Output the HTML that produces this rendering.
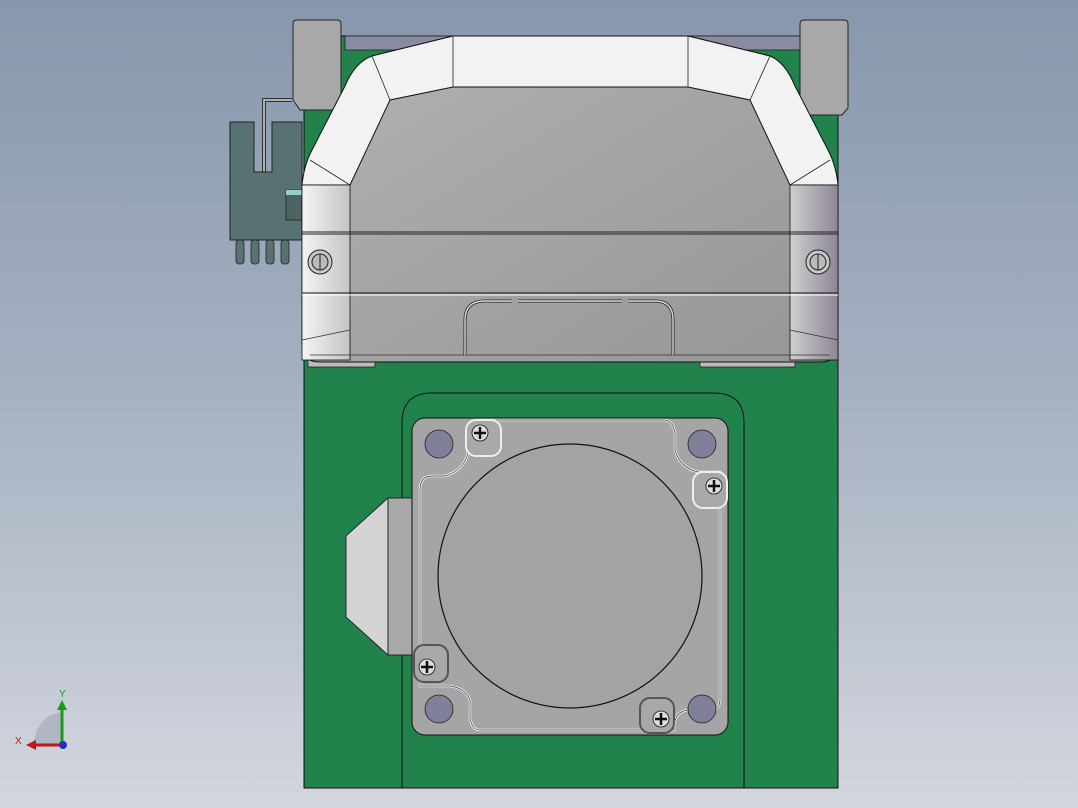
<!DOCTYPE html>
<html><head><style>
html,body{margin:0;padding:0;width:1078px;height:808px;overflow:hidden}
body{background:linear-gradient(#8797ad 0%,#a7b2c2 50%,#d3d6de 100%);font-family:"Liberation Sans",sans-serif}
svg{position:absolute;left:0;top:0}
</style></head><body>
<svg width="1078" height="808" viewBox="0 0 1078 808" xmlns="http://www.w3.org/2000/svg">
<defs>
<linearGradient id="bodyg" x1="0" y1="0" x2="1" y2="1"><stop offset="0" stop-color="#b2b2b2"/><stop offset="1" stop-color="#969696"/></linearGradient>
<linearGradient id="sideL" x1="0" x2="1"><stop offset="0" stop-color="#f4f4f4"/><stop offset="1" stop-color="#c4c4c4"/></linearGradient>
<linearGradient id="sideR" x1="0" x2="1"><stop offset="0" stop-color="#cfcfcf"/><stop offset="1" stop-color="#8e8696"/></linearGradient>
</defs>
<rect x="304" y="36" width="534" height="752" fill="#21834b" stroke="#111" stroke-width="1"/>
<rect x="345" y="36" width="455" height="14" fill="#8a8aa0" stroke="#222" stroke-width="0.8"/>
<path d="M402 788 V423 Q402 393 432 393 H714 Q744 393 744 423 V788" fill="none" stroke="#111" stroke-width="1"/>
<path d="M293 24 Q293 20 297 20 H337 Q341 20 341 24 V100 L335 110 H300 L293 100 Z" fill="#a8a8a8" stroke="#222" stroke-width="1"/>
<path d="M800 24 Q800 20 804 20 H844 Q848 20 848 24 V108 L842 115 H808 L800 108 Z" fill="#a8a8a8" stroke="#222" stroke-width="1"/>
<path d="M264 172 V100 H292" fill="none" stroke="#333" stroke-width="4"/>
<path d="M264 172 V100 H292" fill="none" stroke="#a8b0b0" stroke-width="2"/>
<path d="M230 122 H254 V172 H272 V122 H302 V240 H230 Z" fill="#587272" stroke="#222" stroke-width="1"/>
<rect x="286" y="190" width="16" height="30" fill="#4d6464" stroke="#222" stroke-width="0.8"/>
<rect x="286" y="190" width="16" height="5" fill="#9cc"/>
<g fill="#587272" stroke="#222" stroke-width="0.8">
<rect x="236" y="240" width="8" height="24" rx="3"/><rect x="251" y="240" width="8" height="24" rx="3"/><rect x="266" y="240" width="8" height="24" rx="3"/><rect x="281" y="240" width="8" height="24" rx="3"/>
</g>
<rect x="308" y="355" width="67" height="12" fill="#bcbcbc" stroke="#222" stroke-width="0.8"/>
<rect x="700" y="355" width="95" height="12" fill="#bcbcbc" stroke="#222" stroke-width="0.8"/>
<path d="M302 190 L330 133 Q345 120 372 56 L453 36 H688 L770 56 Q795 110 838 180 V345 Q838 362 820 362 H320 Q302 362 302 345 Z" fill="url(#bodyg)" stroke="#111" stroke-width="1"/>
<path d="M302 185 Q304 165 312 150 L345 86 Q355 62 372 56 L453 36 H688 L770 56 Q785 62 795 86 L828 150 Q836 165 838 185 H790 L750 100 L688 87 H453 L390 100 L350 185 Z" fill="#f2f2f2" stroke="#111" stroke-width="1"/>
<path d="M453 36 V87 M688 36 V87 M372 56 L390 100 M770 56 L750 100 M310 160 L350 185 M830 160 L790 185" stroke="#222" stroke-width="0.8" fill="none"/>
<rect x="302" y="185" width="48" height="175" fill="url(#sideL)" stroke="#111" stroke-width="0.8"/>
<rect x="790" y="185" width="48" height="175" fill="url(#sideR)" stroke="#111" stroke-width="0.8"/>
<path d="M302 232 H838 M302 234 H838" stroke="#222" stroke-width="1"/>
<path d="M302 293 H838" stroke="#111" stroke-width="1"/>
<path d="M302 295 H838" stroke="#fff" stroke-width="1"/>
<path d="M302 340 L350 330 M838 340 L790 330 M310 355 H830" stroke="#333" stroke-width="0.8" fill="none"/>
<circle cx="320" cy="262" r="12" fill="#c8c8c8" stroke="#222"/><circle cx="320" cy="262" r="8" fill="#bbb" stroke="#222"/><line x1="320" y1="254" x2="320" y2="270" stroke="#222"/>
<circle cx="818" cy="262" r="12" fill="#c8c8c8" stroke="#222"/><circle cx="818" cy="262" r="8" fill="#bbb" stroke="#222"/><line x1="818" y1="254" x2="818" y2="270" stroke="#222"/>
<path d="M465 355 V320 Q465 301 485 301 H512 M518 301 H622 M628 301 H655 Q673 301 673 320 V355" fill="none" stroke="#222" stroke-width="3"/>
<path d="M465 355 V320 Q465 301 485 301 H512 M518 301 H622 M628 301 H655 Q673 301 673 320 V355" fill="none" stroke="#ddd" stroke-width="1.4"/>
<path d="M346 536 L388 498 V655 L346 617 Z" fill="#d4d4d4" stroke="#111" stroke-width="0.8"/>
<rect x="388" y="498" width="24" height="157" fill="#a8a8a8" stroke="#111" stroke-width="0.8"/>
<rect x="412" y="418" width="316" height="317" rx="13" fill="#a5a5a5" stroke="#111" stroke-width="1"/>
<path d="M420 490 Q420 476 432 476 H445 Q465 470 468 452 V430 Q470 420 478 420 H664 Q672 420 675 432 V450 Q680 468 698 472 H720 V700 Q720 708 712 710 L690 710 Q676 710 674 725 V730 H480 Q472 730 470 718 V700 Q465 688 450 686 H420 Z" fill="none" stroke="#f4f4f4" stroke-width="2.5"/>
<path d="M420 490 Q420 476 432 476 H445 Q465 470 468 452 V430 Q470 420 478 420 H664 Q672 420 675 432 V450 Q680 468 698 472 H720 V700 Q720 708 712 710 L690 710 Q676 710 674 725 V730 H480 Q472 730 470 718 V700 Q465 688 450 686 H420 Z" fill="none" stroke="#333" stroke-width="0.7"/>
<circle cx="570" cy="576" r="132" fill="#a3a3a3" stroke="#111" stroke-width="1.2"/>
<g fill="#80809a" stroke="#222" stroke-width="0.8">
<circle cx="439" cy="444" r="14"/><circle cx="702" cy="444" r="14"/><circle cx="439" cy="709" r="14"/><circle cx="702" cy="709" r="14"/>
</g>
<g>
<rect x="466" y="420" width="35" height="36" rx="10" fill="#a8a8a8" stroke="#eee" stroke-width="2"/>
<rect x="693" y="472" width="34" height="36" rx="10" fill="#a8a8a8" stroke="#eee" stroke-width="2"/>
<rect x="414" y="645" width="34" height="37" rx="10" fill="#a8a8a8" stroke="#555" stroke-width="2"/>
<rect x="640" y="698" width="34" height="35" rx="10" fill="#a8a8a8" stroke="#555" stroke-width="2"/>
</g>
<g fill="#ddd" stroke="#111" stroke-width="0.8">
<circle cx="480" cy="433" r="8"/><circle cx="714" cy="486" r="8"/><circle cx="427" cy="667" r="8"/><circle cx="661" cy="719" r="8"/>
</g>
<g stroke="#111" stroke-width="2.5">
<path d="M474 433 H486 M480 427 V439"/><path d="M708 486 H720 M714 480 V492"/><path d="M421 667 H433 M427 661 V673"/><path d="M655 719 H667 M661 713 V725"/>
</g>
<path d="M34 745 Q36 716 62 712 V745 Z" fill="#aab0bb" opacity="0.8"/>
<line x1="62" y1="745" x2="62" y2="708" stroke="#1a9a1a" stroke-width="3"/>
<path d="M57 710 L62 700 L67 710 Z" fill="#1a9a1a"/>
<line x1="62" y1="745" x2="34" y2="745" stroke="#c01818" stroke-width="3"/>
<path d="M36 740 L26 745 L36 750 Z" fill="#c01818"/>
<circle cx="63" cy="745" r="4" fill="#2030c0"/>
<text x="59" y="697" font-size="10" fill="#1a9a1a">Y</text>
<text x="15" y="744" font-size="10" fill="#c01818">X</text>
</svg>
</body></html>
